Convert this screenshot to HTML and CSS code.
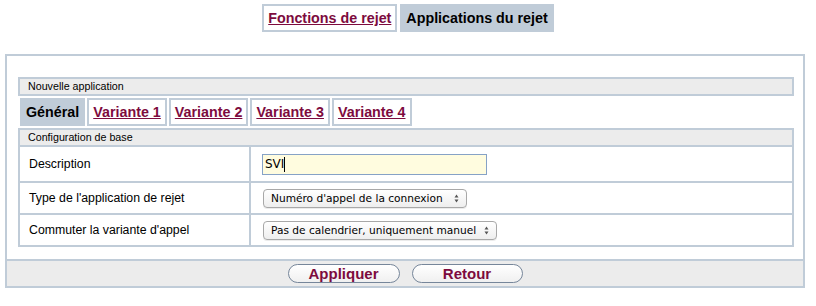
FILE: index.html
```html
<!DOCTYPE html>
<html lang="fr">
<head>
<meta charset="utf-8">
<title>Applications du rejet</title>
<link rel="stylesheet" href="styles.css">
</head>
<body>
<nav class="topnav">
  <a class="tab" href="#">Fonctions de rejet</a>
  <span class="tab tab-active">Applications du rejet</span>
</nav>
<form class="panel">
  <div class="panel-body">
    <div class="section-head">Nouvelle application</div>
    <div class="subtabs">
      <span class="tab tab-active">Général</span>
      <a class="tab" href="#">Variante 1</a>
      <a class="tab" href="#">Variante 2</a>
      <a class="tab" href="#">Variante 3</a>
      <a class="tab" href="#">Variante 4</a>
    </div>
    <div class="section-head">Configuration de base</div>
    <div class="config">
      <div class="row row-tall">
        <div class="label">Description</div>
        <div class="field"><span class="input-wrap"><input class="text-input" type="text" value="SVI"><span class="caret"></span></span></div>
      </div>
      <div class="row">
        <div class="label">Type de l'application de rejet</div>
        <div class="field">
          <span class="select-wrap">
            <select class="select select-type"><option>Numéro d'appel de la connexion</option></select>
            <svg class="arrows" width="5" height="9" viewBox="0 0 5 9"><path d="M2.5 0.5 L4.5 3.5 L0.5 3.5 Z M2.5 8.5 L4.5 5.5 L0.5 5.5 Z" fill="#555"/></svg>
          </span>
        </div>
      </div>
      <div class="row">
        <div class="label">Commuter la variante d'appel</div>
        <div class="field">
          <span class="select-wrap">
            <select class="select select-variant"><option>Pas de calendrier, uniquement manuel</option></select>
            <svg class="arrows" width="5" height="9" viewBox="0 0 5 9"><path d="M2.5 0.5 L4.5 3.5 L0.5 3.5 Z M2.5 8.5 L4.5 5.5 L0.5 5.5 Z" fill="#555"/></svg>
          </span>
        </div>
      </div>
    </div>
  </div>
  <div class="footer">
    <button type="button" class="btn">Appliquer</button>
    <button type="button" class="btn">Retour</button>
  </div>
</form>
</body>
</html>
```
FILE: styles.css
```css
body {
  margin: 0;
  background: #fff;
  color: #000;
  font-family: "Liberation Sans", Arial, sans-serif;
}

.topnav {
  display: flex;
  justify-content: center;
  gap: 3px;
  padding-top: 4px;
}

.tab {
  display: block;
  height: 28px;
  box-sizing: border-box;
  border: 2px solid #c0ccd8;
  padding: 0 4px;
  background: #fff;
  color: #7d0b3e;
  font-size: 14.3px;
  font-weight: bold;
  line-height: 24px;
  text-decoration: underline;
}

.tab-active {
  background: #c0ccd8;
  color: #000;
  text-decoration: none;
}

.panel {
  margin: 22px 0 0 5px;
  width: 800px;
  box-sizing: border-box;
  border: 2px solid #c0ccd8;
}

.panel-body {
  padding: 21px 9px 12px 11px;
}

.section-head {
  height: 19px;
  box-sizing: border-box;
  border: 2px solid #c0ccd8;
  background: #ececec;
  padding-left: 8px;
  font-size: 10.7px;
  line-height: 15px;
}

.subtabs {
  display: flex;
  gap: 2px;
  padding: 2px 0 2px 2px;
}

.config {
  border: 2px solid #c0ccd8;
  border-top: none;
}

.row {
  display: grid;
  grid-template-columns: 231px 1fr;
  height: 30px;
}

.row + .row {
  border-top: 2px solid #c0ccd8;
}

.row-tall {
  height: 34px;
}

.label {
  display: flex;
  align-items: center;
  border-right: 2px solid #c0ccd8;
  padding-left: 9px;
  font-size: 12.3px;
}

.field {
  display: flex;
  align-items: center;
  padding-left: 11px;
}

.input-wrap {
  position: relative;
  display: block;
}

.text-input {
  display: block;
  width: 225px;
  height: 21px;
  box-sizing: border-box;
  margin: 0;
  border: 1px solid #86a2c6;
  background: #fffcdf;
  padding: 0 2px;
  color: #000;
  font-family: "DejaVu Sans", sans-serif;
  font-size: 12px;
  outline: none;
}

.caret {
  position: absolute;
  left: 22px;
  top: 3px;
  width: 1px;
  height: 15px;
  background: #000;
}

.select-wrap {
  position: relative;
  display: block;
  margin-left: 1px;
}

.select {
  display: block;
  height: 19px;
  box-sizing: border-box;
  margin: 0;
  border: 1px solid #a8a8a8;
  border-radius: 4px;
  background: linear-gradient(#ffffff, #eeeeee);
  padding: 0 14px 0 7px;
  color: #000;
  font-family: "DejaVu Sans", sans-serif;
  font-size: 10.6px;
  -webkit-appearance: none;
  appearance: none;
  box-shadow: 0 1px 0 rgba(0, 0, 0, 0.08);
}

.select-type {
  width: 204px;
}

.select-variant {
  width: 234px;
}

.arrows {
  position: absolute;
  right: 8px;
  top: 5px;
}

.footer {
  display: flex;
  justify-content: center;
  align-items: center;
  gap: 12px;
  height: 25px;
  border-top: 2px solid #c0ccd8;
  background: #ececec;
}

.btn {
  min-width: 111px;
  height: 19px;
  box-sizing: border-box;
  margin: 0;
  border: 1px solid #76869a;
  border-radius: 10px;
  background: linear-gradient(#ffffff, #f0f0f0);
  padding: 0 20px;
  color: #7d0b3e;
  font-family: "Liberation Sans", Arial, sans-serif;
  font-size: 15px;
  font-weight: bold;
  line-height: 17px;
}
```
